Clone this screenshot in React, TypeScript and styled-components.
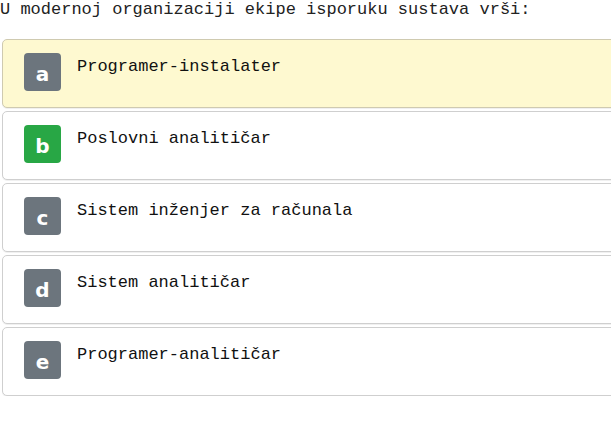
import React from "react";
import styled, { createGlobalStyle } from "styled-components";

const Global = createGlobalStyle`
  html, body { margin: 0; padding: 0; background: #fff; overflow: hidden; }
  body { font-family: "Liberation Mono", "Courier New", monospace; }
`;

const Page = styled.div`
  width: 630px;
  padding: 0 0 0 2px;
`;

const Question = styled.div`
  font-family: "Liberation Mono", "Courier New", monospace;
  font-size: 17px;
  line-height: 20px;
  color: #222;
  margin: 0 0 19px -2px;
`;

const List = styled.div`
  display: flex;
  flex-direction: column;
  gap: 3px;
`;

const Card = styled.div<{ $selected?: boolean }>`
  display: flex;
  align-items: flex-start;
  gap: 16px;
  box-sizing: border-box;
  height: 69px;
  padding: 13px 20px 0 21px;
  border: 1px solid ${(p) => (p.$selected ? "#cfcab0" : "#cfcfcf")};
  border-radius: 5px;
  background: ${(p) => (p.$selected ? "#fef9d0" : "#fff")};
  box-shadow: 0 1px 0 rgba(0, 0, 0, 0.06);
`;

const Badge = styled.div<{ $green?: boolean }>`
  flex: none;
  width: 37px;
  height: 38px;
  border-radius: 4px;
  background: ${(p) => (p.$green ? "#28a745" : "#6c757d")};
  color: #fff;
  font-family: "DejaVu Sans", "Liberation Sans", sans-serif;
  font-weight: bold;
  font-size: 20px;
  display: flex;
  align-items: center;
  justify-content: center;
  padding-top: 4px;
  box-sizing: border-box;
`;

const Label = styled.div`
  font-family: "Liberation Mono", "Courier New", monospace;
  font-size: 17px;
  line-height: 20px;
  color: #111;
  margin-top: 4px;
`;

const options = [
  { key: "a", text: "Programer-instalater", selected: true },
  { key: "b", text: "Poslovni analitičar", green: true },
  { key: "c", text: "Sistem inženjer za računala" },
  { key: "d", text: "Sistem analitičar" },
  { key: "e", text: "Programer-analitičar" },
];

export default function App() {
  return (
    <>
      <Global />
      <Page>
        <Question>U modernoj organizaciji ekipe isporuku sustava vrši:</Question>
        <List>
          {options.map((o) => (
            <Card key={o.key} $selected={o.selected}>
              <Badge $green={o.green}>{o.key}</Badge>
              <Label>{o.text}</Label>
            </Card>
          ))}
        </List>
      </Page>
    </>
  );
}
